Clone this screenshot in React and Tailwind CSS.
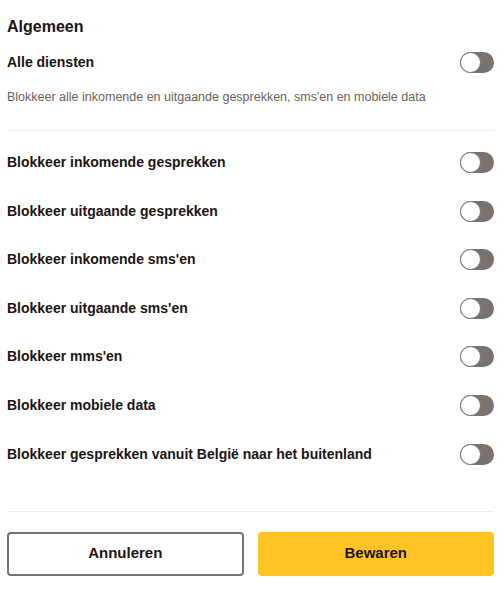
import { useState } from "react";

const rows = [
  "Blokkeer inkomende gesprekken",
  "Blokkeer uitgaande gesprekken",
  "Blokkeer inkomende sms'en",
  "Blokkeer uitgaande sms'en",
  "Blokkeer mms'en",
  "Blokkeer mobiele data",
  "Blokkeer gesprekken vanuit België naar het buitenland",
];

const Toggle = ({ on, onClick }) => (
  <button
    onClick={onClick}
    className={`relative w-[34px] h-[21px] rounded-full shrink-0 ${on ? "bg-[#ffc423]" : "bg-[#7a726c]"}`}
  >
    <span
      className={`absolute top-0 w-[21px] h-[21px] rounded-full bg-white border border-[#7a726c] ${on ? "left-[13px]" : "left-0"}`}
    />
  </button>
);

const App = () => {
  const [all, setAll] = useState(false);
  const [values, setValues] = useState(rows.map(() => false));

  const flip = (i) => {
    setValues(values.map((v, j) => (j === i ? !v : v)));
  };

  return (
    <div className="w-[504px] h-[600px] bg-white pl-[7px] pr-[10px] text-[#1c1412] font-['Liberation_Sans',sans-serif]">
      <h1 className="pt-[16px] text-[16px] font-bold leading-[22px]">Algemeen</h1>
      <div className="flex items-center justify-between mt-[14px] h-[21px]">
        <span className="text-[14px] font-bold">Alle diensten</span>
        <Toggle on={all} onClick={() => setAll(!all)} />
      </div>
      <p className="mt-[15px] text-[12.5px] text-[#6b625c] leading-[18px]">
        Blokkeer alle inkomende en uitgaande gesprekken, sms'en en mobiele data
      </p>
      <div className="mt-[24px] border-t border-[#efeeed]" />
      <div className="pt-[21px]">
        {rows.map((label, i) => (
          <div key={label} className="flex items-center justify-between h-[21px] mb-[27.6px]">
            <span className="text-[14px] font-bold">{label}</span>
            <Toggle on={values[i]} onClick={() => flip(i)} />
          </div>
        ))}
      </div>
      <div className="mt-[46px] border-t border-[#efeeed]" />
      <div className="grid grid-cols-2 gap-[14px] mt-[20px]">
        <button className="h-[44px] rounded border-2 border-[#7a726c] text-[15px] font-bold">
          Annuleren
        </button>
        <button className="h-[44px] rounded bg-[#ffc423] text-[15px] font-bold">
          Bewaren
        </button>
      </div>
    </div>
  );
};

export default App;
